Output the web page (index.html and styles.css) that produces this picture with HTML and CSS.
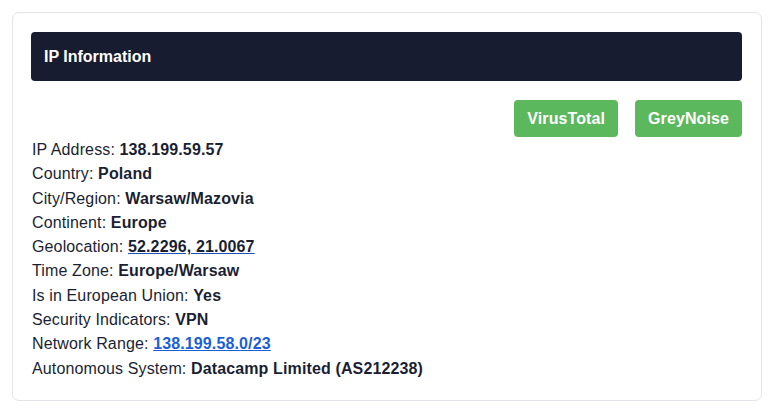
FILE: index.html
```html
<!DOCTYPE html>
<html>
<head>
<meta charset="utf-8">
<link rel="stylesheet" href="styles.css">
</head>
<body>
<div class="card">
  <div class="card-header">IP Information</div>
  <div class="actions">
    <a class="btn" href="#">VirusTotal</a>
    <a class="btn" href="#">GreyNoise</a>
  </div>
  <div class="info">
    <div class="row">IP Address: <b>138.199.59.57</b></div>
    <div class="row">Country: <b>Poland</b></div>
    <div class="row">City/Region: <b>Warsaw/Mazovia</b></div>
    <div class="row">Continent: <b>Europe</b></div>
    <div class="row">Geolocation: <a class="geo" href="#"><b>52.2296, 21.0067</b></a></div>
    <div class="row">Time Zone: <b>Europe/Warsaw</b></div>
    <div class="row">Is in European Union: <b>Yes</b></div>
    <div class="row">Security Indicators: <b>VPN</b></div>
    <div class="row">Network Range: <a class="net" href="#"><b>138.199.58.0/23</b></a></div>
    <div class="row">Autonomous System: <b>Datacamp Limited (AS212238)</b></div>
  </div>
</div>
</body>
</html>
```

FILE: styles.css
```css
html, body {
  margin: 0;
  padding: 0;
  background: #ffffff;
}
body {
  padding: 12px;
  font-family: "Liberation Sans", Arial, sans-serif;
  color: #1a1f33;
}
.card {
  width: 711px;
  border: 1px solid #e3e3ea;
  border-radius: 7px;
  padding: 19px 19px 19px 18px;
}
.card-header {
  background: #171c31;
  color: #ffffff;
  font-weight: bold;
  font-size: 16px;
  height: 49px;
  line-height: 49px;
  padding-left: 13px;
  border-radius: 4px;
}
.actions {
  display: flex;
  justify-content: flex-end;
  gap: 17px;
  margin-top: 19px;
}
.btn {
  display: block;
  background: #5cb85c;
  color: #ffffff;
  font-weight: bold;
  font-size: 16px;
  letter-spacing: 0.1px;
  text-decoration: none;
  height: 37px;
  line-height: 37px;
  padding: 0 13px;
  border-radius: 4px;
}
.info {
  font-size: 16px;
  letter-spacing: 0.13px;
  line-height: 24.3px;
  padding-left: 1px;
  padding-top: 1px;
}
.row b {
  font-weight: bold;
}
.geo {
  color: #1a1f33;
  text-decoration: underline;
  text-decoration-color: #1d4fb8;
}
.net {
  color: #1b5fd6;
  text-decoration: underline;
}
```
